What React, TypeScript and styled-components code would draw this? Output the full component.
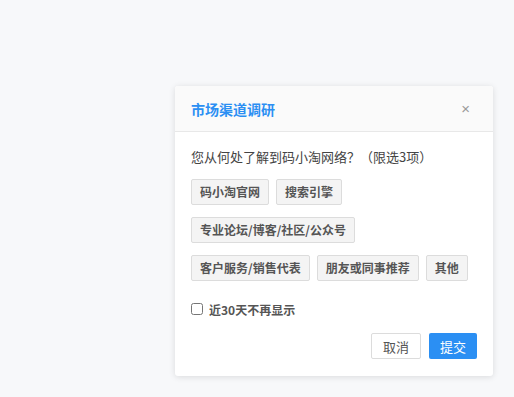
import React, { useState } from "react";
import styled, { createGlobalStyle } from "styled-components";

const Global = createGlobalStyle`
  html, body { margin: 0; padding: 0; }
  body {
    background: #f7f8fa;
    font-family: "Noto Sans CJK SC", "Noto Sans", "Liberation Sans", sans-serif;
    width: 514px;
    height: 397px;
    overflow: hidden;
  }
`;

const Page = styled.div`
  width: 514px;
  height: 397px;
  padding: 86px 0 0 175px;
  box-sizing: border-box;
`;

const Dialog = styled.div`
  width: 318px;
  background: #fff;
  border-radius: 3px;
  box-shadow: 0 1px 6px rgba(0, 0, 0, 0.12);
  display: flex;
  flex-direction: column;
`;

const Header = styled.div`
  height: 45px;
  background: #fafafa;
  border-bottom: 1px solid #e8e8e8;
  display: flex;
  align-items: center;
  justify-content: space-between;
  padding: 0 23px 0 16px;
  border-radius: 3px 3px 0 0;
`;

const Title = styled.div`
  font-size: 14px;
  font-weight: 700;
  color: #2b8ff3;
`;

const Close = styled.button`
  border: none;
  background: none;
  padding: 0;
  color: #999;
  font-size: 15px;
  line-height: 1;
  cursor: pointer;
  font-family: "Liberation Sans", sans-serif;
`;

const Body = styled.div`
  padding: 15px 16px 17px;
  display: flex;
  flex-direction: column;
`;

const Question = styled.div`
  font-size: 13px;
  line-height: 20px;
  color: #444;
  margin-bottom: 12px;
`;

const Tags = styled.div`
  display: flex;
  flex-wrap: wrap;
  gap: 12px 7px;
`;

const Tag = styled.button<{ $active?: boolean }>`
  height: 26px;
  padding: 0 8px;
  border: 1px solid ${(p) => (p.$active ? "#2b8ff3" : "#dcdcdc")};
  background: ${(p) => (p.$active ? "#eaf4ff" : "#f4f4f4")};
  color: ${(p) => (p.$active ? "#2b8ff3" : "#555")};
  border-radius: 2px;
  font-size: 12px;
  font-weight: 700;
  font-family: inherit;
  line-height: 24px;
  cursor: pointer;
`;

const CheckRow = styled.label`
  display: flex;
  align-items: center;
  gap: 6px;
  margin-top: 20px;
  font-size: 12px;
  font-weight: 700;
  color: #555;
  height: 16px;
`;

const Box = styled.input`
  width: 12px;
  height: 12px;
  margin: 0;
  accent-color: #2b8ff3;
`;

const Footer = styled.div`
  display: flex;
  justify-content: flex-end;
  gap: 8px;
  margin-top: 16px;
`;

const Btn = styled.button<{ $primary?: boolean }>`
  height: 26px;
  padding: 0 11px;
  border-radius: 2px;
  border: ${(p) => (p.$primary ? "none" : "1px solid #dcdcdc")};
  background: ${(p) => (p.$primary ? "#2b8ff3" : "#fff")};
  color: ${(p) => (p.$primary ? "#fff" : "#555")};
  font-size: 13px;
  font-family: inherit;
  cursor: pointer;
`;

const options = [
  "码小淘官网",
  "搜索引擎",
  "专业论坛/博客/社区/公众号",
  "客户服务/销售代表",
  "朋友或同事推荐",
  "其他",
];

export default function App() {
  const [sel, setSel] = useState<string[]>([]);
  const toggle = (o: string) =>
    setSel((s) =>
      s.includes(o) ? s.filter((x) => x !== o) : s.length < 3 ? [...s, o] : s
    );
  return (
    <>
      <Global />
      <Page>
        <Dialog>
          <Header>
            <Title>市场渠道调研</Title>
            <Close>×</Close>
          </Header>
          <Body>
            <Question>您从何处了解到码小淘网络？（限选3项）</Question>
            <Tags>
              {options.map((o) => (
                <Tag key={o} $active={sel.includes(o)} onClick={() => toggle(o)}>
                  {o}
                </Tag>
              ))}
            </Tags>
            <CheckRow>
              <Box type="checkbox" />
              近30天不再显示
            </CheckRow>
            <Footer>
              <Btn>取消</Btn>
              <Btn $primary>提交</Btn>
            </Footer>
          </Body>
        </Dialog>
      </Page>
    </>
  );
}
